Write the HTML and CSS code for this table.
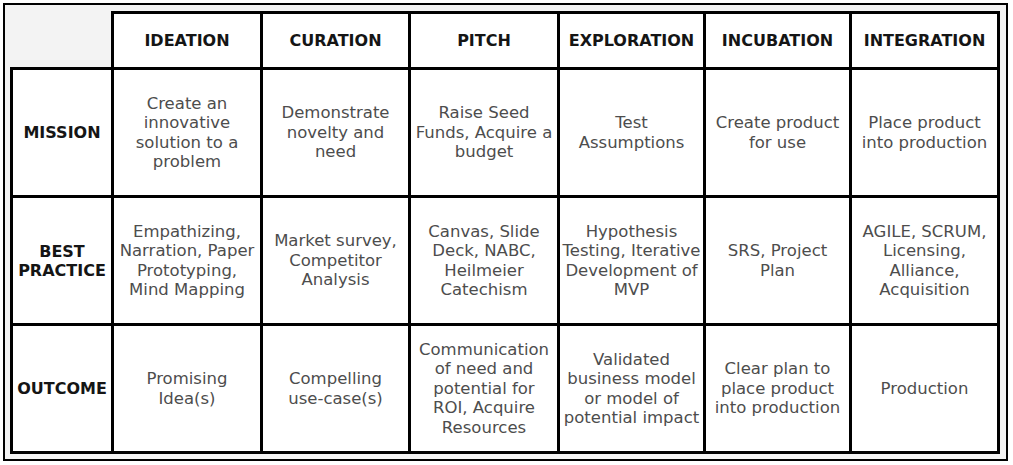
FILE: index.html
```html
<!DOCTYPE html>
<html>
<head>
<meta charset="utf-8">
<link rel="stylesheet" href="styles.css">
</head>
<body>
<div class="frame">
<table class="grid">
<colgroup>
<col class="c0"><col class="c1"><col class="c2"><col class="c3"><col class="c4"><col class="c5"><col class="c6">
</colgroup>
<thead>
<tr class="head">
<th class="corner"></th>
<th>IDEATION</th>
<th>CURATION</th>
<th>PITCH</th>
<th>EXPLORATION</th>
<th>INCUBATION</th>
<th>INTEGRATION</th>
</tr>
</thead>
<tbody>
<tr>
<th class="rowhead">MISSION</th>
<td>Create an<br>innovative<br>solution to a<br>problem</td>
<td>Demonstrate<br>novelty and<br>need</td>
<td>Raise Seed<br>Funds, Acquire a<br>budget</td>
<td>Test<br>Assumptions</td>
<td>Create product<br>for use</td>
<td>Place product<br>into production</td>
</tr>
<tr>
<th class="rowhead">BEST<br>PRACTICE</th>
<td>Empathizing,<br>Narration, Paper<br>Prototyping,<br>Mind Mapping</td>
<td>Market survey,<br>Competitor<br>Analysis</td>
<td>Canvas, Slide<br>Deck, NABC,<br>Heilmeier<br>Catechism</td>
<td>Hypothesis<br>Testing, Iterative<br>Development of<br>MVP</td>
<td>SRS, Project<br>Plan</td>
<td>AGILE, SCRUM,<br>Licensing,<br>Alliance,<br>Acquisition</td>
</tr>
<tr>
<th class="rowhead">OUTCOME</th>
<td>Promising<br>Idea(s)</td>
<td>Compelling<br>use-case(s)</td>
<td>Communication<br>of need and<br>potential for<br>ROI, Acquire<br>Resources</td>
<td>Validated<br>business model<br>or model of<br>potential impact</td>
<td>Clear plan to<br>place product<br>into production</td>
<td>Production</td>
</tr>
</tbody>
</table>
</div>
</body>
</html>
```

FILE: styles.css
```css
html, body {
  margin: 0;
  padding: 0;
  background: #ffffff;
}

.frame {
  margin: 3px 0 0 3px;
  width: 1005px;
  height: 458px;
  box-sizing: border-box;
  border: 2px solid #000;
  background: #f3f3f3;
  padding: 6px 0 0 5px;
}

.grid {
  border-collapse: collapse;
  table-layout: fixed;
  width: 990px;
  font-family: "DejaVu Sans", "Open Sans", sans-serif;
}

.c0 { width: 101px; }
.c1 { width: 149px; }
.c2 { width: 148px; }
.c3 { width: 149px; }
.c4 { width: 146px; }
.c5 { width: 146px; }
.c6 { width: 148px; }

.grid th,
.grid td {
  border: 3px solid #000;
  background: #fff;
  text-align: center;
  vertical-align: middle;
  padding: 0;
}

.head {
  height: 56px;
}

.grid tbody tr {
  height: 128px;
}

.head th {
  font-size: 16px;
  font-weight: 700;
  color: #151515;
  line-height: 19px;
}

.head th.corner {
  background: #f3f3f3;
  border-top: none;
  border-left: none;
}

.rowhead {
  font-size: 16px;
  font-weight: 700;
  color: #151515;
  line-height: 19px;
}

.grid td {
  font-size: 16.5px;
  line-height: 19.4px;
  color: #4d4d4d;
}
```
